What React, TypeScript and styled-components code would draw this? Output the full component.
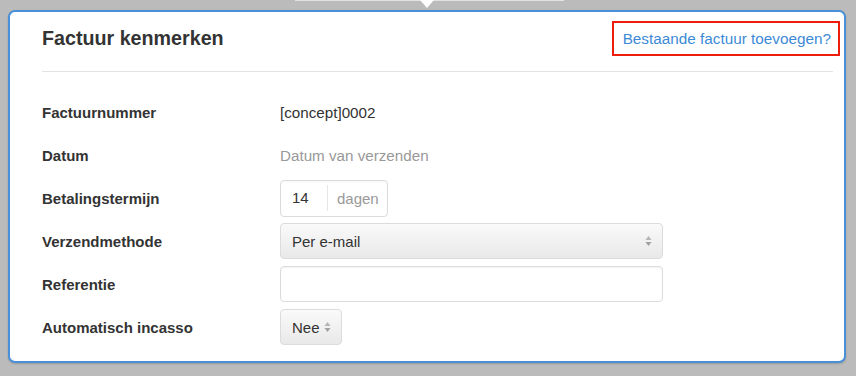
import React from 'react'
import styled, { createGlobalStyle } from 'styled-components'

const GlobalStyle = createGlobalStyle`
  html, body {
    margin: 0;
    padding: 0;
    background: #bbbbbb;
    font-family: "Liberation Sans", Arial, Helvetica, sans-serif;
  }
`

type Field = {
  label: string
  kind: 'text' | 'muted' | 'days' | 'select' | 'input' | 'small-select'
  value?: string
}

const fields: Field[] = [
  { label: 'Factuurnummer', kind: 'text', value: '[concept]0002' },
  { label: 'Datum', kind: 'muted', value: 'Datum van verzenden' },
  { label: 'Betalingstermijn', kind: 'days', value: '14' },
  { label: 'Verzendmethode', kind: 'select', value: 'Per e-mail' },
  { label: 'Referentie', kind: 'input' },
  { label: 'Automatisch incasso', kind: 'small-select', value: 'Nee' },
]

const Arrows = () => (
  <ArrowIcon width="7" height="12" viewBox="0 0 7 12">
    <path d="M3.5 1 L6.5 5 L0.5 5 Z" fill="#b5b5b5" />
    <path d="M3.5 11 L6.5 7 L0.5 7 Z" fill="#a0a0a0" />
  </ArrowIcon>
)

const renderValue = (f: Field) => {
  switch (f.kind) {
    case 'text':
      return <Value>{f.value}</Value>
    case 'muted':
      return <Value muted>{f.value}</Value>
    case 'days':
      return (
        <InputGroup>
          <DaysInput>{f.value}</DaysInput>
          <Addon>dagen</Addon>
        </InputGroup>
      )
    case 'select':
      return (
        <SelectBox wide>
          <span>{f.value}</span>
          <Arrows />
        </SelectBox>
      )
    case 'small-select':
      return (
        <SelectBox>
          <span>{f.value}</span>
          <Arrows />
        </SelectBox>
      )
    default:
      return <TextInput />
  }
}

export const App = () => {
  return (
    <>
      <GlobalStyle />
      <Page>
        <TopStrip>
          <Pointer />
        </TopStrip>
        <Panel>
          <Header>
            <Title>Factuur kenmerken</Title>
            <Link href="#">Bestaande factuur toevoegen?</Link>
          </Header>
          <Divider />
          <Form>
            {fields.map((f) => (
              <Row key={f.label}>
                <Label>{f.label}</Label>
                {renderValue(f)}
              </Row>
            ))}
          </Form>
        </Panel>
      </Page>
    </>
  )
}

const Page = styled.div`
  position: relative;
  width: 856px;
  height: 376px;
  padding: 10px 10px 0 8px;
  box-sizing: border-box;
`

const TopStrip = styled.div`
  position: absolute;
  top: 0;
  left: 295px;
  width: 269px;
  height: 1px;
  background: #e3e3e3;
`

const Pointer = styled.div`
  position: absolute;
  top: 0;
  left: 125px;
  width: 0;
  height: 0;
  border-left: 7px solid transparent;
  border-right: 7px solid transparent;
  border-top: 8px solid #ffffff;
`

const Panel = styled.div`
  height: 353px;
  box-sizing: border-box;
  background: #ffffff;
  border: 2px solid #4a90d9;
  border-radius: 7px;
  box-shadow: 0 1px 2px rgba(0, 0, 0, 0.18);
`

const Header = styled.div`
  display: flex;
  justify-content: space-between;
  align-items: center;
  padding: 9px 4px 0 32px;
  height: 35px;
`

const Title = styled.h2`
  margin: 0;
  font-size: 19.7px;
  font-weight: bold;
  color: #333333;
`

const Link = styled.a`
  display: block;
  padding: 0 7px 0 9px;
  height: 31px;
  line-height: 31px;
  border: 2px solid #ee1c0a;
  font-size: 15.3px;
  color: #3d8ad6;
  text-decoration: none;
`

const Divider = styled.hr`
  margin: 15px 11px 0 32px;
  border: 0;
  border-top: 1px solid #e3e3e3;
`

const Form = styled.div`
  display: flex;
  flex-direction: column;
  gap: 7px;
  padding: 22px 32px 0;
`

const Row = styled.div`
  display: flex;
  align-items: center;
  height: 36px;
`

const Label = styled.div`
  width: 238px;
  flex-shrink: 0;
  font-size: 15px;
  font-weight: bold;
  color: #333333;
`

const Value = styled.div<{ muted?: boolean }>`
  font-size: 15.2px;
  color: ${(p) => (p.muted ? '#999999' : '#333333')};
`

const InputGroup = styled.div`
  display: flex;
  align-items: center;
  width: 108px;
  height: 37px;
  box-sizing: border-box;
  border: 1px solid #dcdcdc;
  border-radius: 4px;
  box-shadow: inset 0 1px 2px rgba(0, 0, 0, 0.04);
  font-size: 15px;
`

const DaysInput = styled.div`
  width: 47px;
  box-sizing: border-box;
  padding-left: 11px;
  color: #333333;
  border-right: 1px solid #e6e6e6;
  line-height: 26px;
`

const Addon = styled.div`
  padding-left: 9px;
  color: #999999;
`

const SelectBox = styled.div<{ wide?: boolean }>`
  display: flex;
  align-items: center;
  justify-content: space-between;
  width: ${(p) => (p.wide ? '383px' : '62px')};
  height: 36px;
  box-sizing: border-box;
  padding: 0 10px 0 11px;
  border: 1px solid #dcdcdc;
  border-radius: 4px;
  background: linear-gradient(to bottom, #fafafa, #e9e9e9);
  font-size: 15px;
  color: #333333;
`

const ArrowIcon = styled.svg`
  display: block;
  flex-shrink: 0;
`

const TextInput = styled.div`
  width: 383px;
  height: 36px;
  box-sizing: border-box;
  border: 1px solid #dcdcdc;
  border-radius: 4px;
  background: #ffffff;
  box-shadow: inset 0 1px 2px rgba(0, 0, 0, 0.05);
`

export default App
